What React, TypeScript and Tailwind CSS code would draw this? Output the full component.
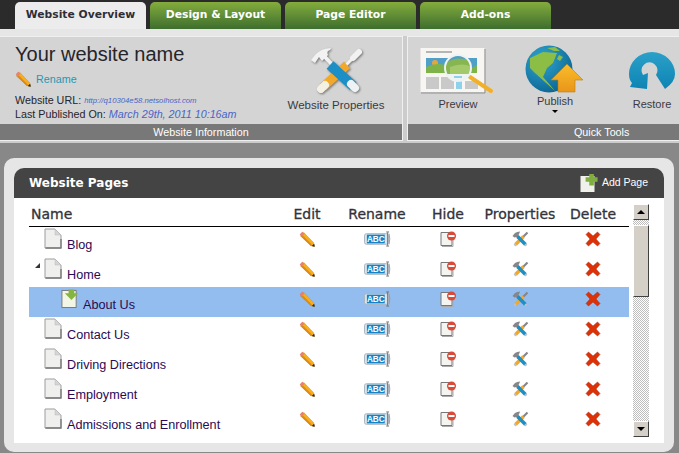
const sans = "font-['Liberation_Sans',Arial,sans-serif]";
const dejavu = "font-['DejaVu_Sans',Verdana,sans-serif]";
const columns = 'grid grid-cols-[248px_60px_80px_62px_82px_64px_4px]';

const Pencil = () => (
  <svg viewBox="0 0 16 16" className="w-4 h-4 drop-shadow-[0.5px_0.5px_0.5px_rgba(0,0,0,0.35)]">
    <path d="M1.5 5 5 1.500 15 12 15.500 15.500 12 15Z" fill="#f5ae24" />
    <path d="M1.5 5 12 15 13.500 14.200 3 3.500Z" fill="#dd8a14" />
    <path d="M.8 3.500 3.500.8 5.500 2.800 2.800 5.500Z" fill="#e8836a" />
    <path d="M12.800 15.100 15.100 12.800 15.700 15.700Z" fill="#222" />
  </svg>
);

const AbcIcon = () => (
  <svg viewBox="0 0 28 16" className="w-[27px] h-[16px]">
    <rect x="0.500" y="2.500" width="25" height="11" rx="2" fill="#dbe3ea" stroke="#aab4bd" />
    <rect x="3" y="3.500" width="18.500" height="9" fill="#1583c4" />
    <text x="12.200" y="11" textAnchor="middle" fontSize="8.500" fontWeight="700" fill="#fff" fontFamily="Liberation Sans">ABC</text>
    <path d="M23 .7h3M23 15.300h3M24.500 1v14" stroke="#77706a" strokeWidth="1" fill="none" />
    <path d="M26 2.500q1.500 5.500 0 11" stroke="#9a9a9a" strokeWidth="1" fill="none" />
  </svg>
);

const HideIcon = () => (
  <svg viewBox="0 0 17 16" className="w-[17px] h-[16px]">
    <path d="M1 1.500h11v13H1Z" fill="#f4f4f0" stroke="#77777a" />
    <path d="M2 15.500h11V9" stroke="#aaa" fill="none" />
    <circle cx="11.500" cy="5" r="4.500" fill="#d94a38" />
    <rect x="8.500" y="4" width="6" height="2" fill="#fff" />
  </svg>
);

const LargeTools = () => (
  <svg viewBox="0 0 52 50" className="w-[52px] h-[50px] drop-shadow-[1px_1px_1px_rgba(0,0,0,0.45)]">
    <path d="M15 11 29 26" stroke="#f2f2f2" strokeWidth="4" />
    <path d="M1 14 6 8Q12 2 21 2L20 4Q16 5 18 9L12 15 9 11 5 17Z" fill="#f2f2f2" />
    <path d="M31 24 44 11" stroke="#f2f2f2" strokeWidth="3" />
    <path d="M43 12 49 6" stroke="#f2f2f2" strokeWidth="6" strokeLinecap="round" />
    <path d="M37 19 13 41" stroke="#f2a82a" strokeWidth="9" />
    <path d="M15 39 11 43" stroke="#f4f0e4" strokeWidth="8" strokeLinecap="round" />
    <path d="M20 19 43 40" stroke="#1b8fc6" strokeWidth="10" />
    <path d="M41 38 45 42" stroke="#eef2f4" strokeWidth="8" strokeLinecap="round" />
  </svg>
);

const SmallTools = () => (
  <svg viewBox="0 0 17 16" className="w-[17px] h-[16px]">
    <path d="M.5 5 3 2Q5 .5 8 .5L7.500 2 6.500 4 8 6 6 8 4.500 6 2.500 6.500Z" fill="#85858a" />
    <path d="M10 7 15.500 1.500" stroke="#85858a" strokeWidth="2.200" />
    <path d="M11.500 5.500 3.500 13.500" stroke="#f2a82a" strokeWidth="3.500" />
    <path d="M5.500 5.500 13.500 13.500" stroke="#1b8fc6" strokeWidth="3.500" />
    <path d="M3.800 13.200 2.500 14.500M13.200 13.200 14.500 14.500" stroke="#b9c2c8" strokeWidth="2.500" />
  </svg>
);

const DeleteX = () => (
  <svg viewBox="0 0 16 16" className="w-4 h-4">
    <path d="M1 3.500 3.500 1 8 5 12.500 1 15 3.500 11 8 15 12.500 12.500 15 8 11 3.500 15 1 12.500 5 8Z" fill="#dd3208" stroke="#a82a10" strokeWidth=".5" />
  </svg>
);

const PageIcon = () => (
  <svg viewBox="0 0 18 21" className="w-[18px] h-[21px] shrink-0">
    <path d="M1 1h10l6 6v13H1Z" fill="#efefed" stroke="#9d9d9d" />
    <path d="M11 1v6h6Z" fill="#d5d5d8" stroke="#bbb" strokeWidth=".5" />
    <path d="M1.500 20h15.500V11" stroke="#777" strokeWidth="1.300" fill="none" />
  </svg>
);

const NewPageIcon = () => (
  <svg viewBox="0 0 19 21" className="w-[18px] h-[21px] shrink-0">
    <rect x="1" y="2" width="15" height="18" fill="#f3f5e6" stroke="#77777a" />
    <path d="M8 1h6v4h4l-7 7-7-7h4Z" fill="#86b440" />
  </svg>
);

const AddPageIcon = () => (
  <svg viewBox="0 0 19 18" className="w-[19px] h-[18px]">
    <rect x="0.500" y="2" width="14" height="16" fill="#f1f1ec" />
    <path d="M9 0h5v4h4v5h-4v4H9V9H5V4h4Z" transform="translate(1 -.5) scale(.92)" fill="#7fae3e" />
  </svg>
);

const PreviewIcon = () => (
  <svg viewBox="0 0 76 48" className="w-[76px] h-[48px]">
    <defs>
      <clipPath id="lens">
        <circle cx="38" cy="21" r="13" />
      </clipPath>
    </defs>
    <rect x="0.500" y="1" width="64" height="44" fill="#f7f6f2" />
    <path d="M1 46h64V2" stroke="#8f8f8f" fill="none" />
    <rect x="6" y="4" width="26" height="2" fill="#b5b5b5" />
    <rect x="6" y="11" width="51" height="15" fill="#4f9fc9" />
    <circle cx="15" cy="16" r="3" fill="#e7a63b" />
    <path d="M6 26V20Q18 14 32 20T57 18V26Z" fill="#7eb34a" />
    <rect x="6" y="30" width="13" height="12" fill="#c9c9c9" />
    <rect x="21" y="30" width="13" height="12" fill="#c9c9c9" />
    <rect x="36" y="30" width="6" height="12" fill="#8fd0ea" />
    <rect x="45" y="34" width="13" height="8" fill="#c9c9c9" />
    <path d="M50 30 71 44" stroke="#f2b02a" strokeWidth="4" strokeLinecap="round" />
    <g clipPath="url(#lens)">
      <rect x="24" y="7" width="28" height="28" fill="#eef4f4" />
      <rect x="24" y="7" width="28" height="8" fill="#4f9fc9" />
      <path d="M24 17Q36 8 52 14V27H24Z" fill="#86b552" />
      <path d="M30 20Q42 15 52 20V27H30Z" fill="#a3c96a" />
      <rect x="34" y="29" width="8" height="2" fill="#8fd0ea" />
    </g>
    <circle cx="38" cy="21" r="13" fill="none" stroke="#eef2f2" strokeWidth="2" />
  </svg>
);

const GlobeIcon = () => (
  <svg viewBox="0 0 60 48" className="w-[60px] h-[48px]">
    <defs>
      <radialGradient id="ocean" cx="35%" cy="30%" r="75%">
        <stop offset="0%" stopColor="#2fa6cf" />
        <stop offset="100%" stopColor="#0c6593" />
      </radialGradient>
      <linearGradient id="arrow" x1="0" y1="0" x2="0" y2="1">
        <stop offset="0%" stopColor="#fbbd2a" />
        <stop offset="100%" stopColor="#e9951a" />
      </linearGradient>
    </defs>
    <circle cx="24" cy="24" r="23.500" fill="url(#ocean)" />
    <path d="M5 13 18 7 32 8 28 18 22 23 18 32 25 40 30 46 20 37 10 28 5 23Z" fill="#8cbd45" />
    <path d="M22 3 30 2 35 6 29 6Z" fill="#8cbd45" />
    <path d="M34 10 38 12 35 16 32 14Z" fill="#8cbd45" />
    <path d="M42 19 58 35H50V47H33V35H26Z" fill="url(#arrow)" stroke="#b97f14" strokeWidth=".6" />
  </svg>
);

const RestoreIcon = () => (
  <svg viewBox="0 0 48 42" className="w-[48px] h-[42px]">
    <defs>
      <linearGradient id="restore" x1="0" y1="0" x2="0" y2="1">
        <stop offset="0%" stopColor="#2ba0c9" />
        <stop offset="100%" stopColor="#0d84b4" />
      </linearGradient>
    </defs>
    <path
      d="M37 39Q47 32 47 24A23 22 0 0 0 24 2A23 22 0 0 0 1 24Q1 30 4 33L2 37 19 39 20 23 15 25A8 8 0 1 1 28 25Z"
      fill="url(#restore)"
    />
  </svg>
);

const ScrollButton = ({ up }: { up?: boolean }) => (
  <div className="w-4 h-4 bg-[#d4d0c8] border border-t-white border-l-white border-r-[#404040] border-b-[#404040] flex items-center justify-center">
    <div className={`w-0 h-0 border-x-[4px] border-x-transparent ${up ? 'border-b-[4px] border-b-black' : 'border-t-[4px] border-t-black'}`} />
  </div>
);

const pages = [
  { name: 'Blog', indent: 'pl-[15px]' },
  { name: 'Home', indent: 'pl-[15px]', arrow: true },
  { name: 'About Us', indent: 'pl-[32px]', selected: true },
  { name: 'Contact Us', indent: 'pl-[15px]' },
  { name: 'Driving Directions', indent: 'pl-[15px]' },
  { name: 'Employment', indent: 'pl-[15px]' },
  { name: 'Admissions and Enrollment', indent: 'pl-[15px]' },
];

const tabs = ['Design & Layout', 'Page Editor', 'Add-ons'];

const App = () => {
  return (
    <div className={`w-[679px] h-[453px] overflow-hidden bg-[#888888] ${sans}`}>
      {/* Tabs */}
      <div className="h-[29px] bg-[#2b2b2b] flex items-end gap-1 pl-[15px]">
        <div className={`w-[131px] h-[27px] bg-[#ececec] rounded-t-[5px] flex items-center justify-center text-[10.75px] font-bold text-[#2e2e38] ${dejavu}`}>
          Website Overview
        </div>
        {tabs.map((tab) => (
          <div
            key={tab}
            className={`w-[131px] h-[27px] rounded-t-[5px] bg-gradient-to-b from-[#84ad3c] to-[#3e6e2e] flex items-center justify-center text-[10.75px] font-bold text-white ${dejavu}`}
          >
            {tab}
          </div>
        ))}
      </div>

      {/* Toolbar */}
      <div className="h-[114px] bg-[#cccccc] border-t-[7px] border-[#e6e6e6] flex gap-1">
        <div className="w-[403px] h-[105px] bg-[#d4d4d4] border-t border-r border-b border-[#f0f0f0] flex flex-col">
          <div className="flex-1 flex pl-[15px]">
            <div className="w-[240px] flex flex-col text-[#25252b]">
              <div className="text-[20px] leading-[23px] mt-[6px]">Your website name</div>
              <div className="flex items-center gap-[5px] mt-[5px] text-[10.75px] text-[#1c9ab4]">
                <Pencil />
                Rename
              </div>
              <div className="text-[10.75px] leading-[13px] mt-[7px] flex items-center gap-[3px]">
                Website URL:
                <span className="text-[7.75px] italic text-[#4a64c8]">http://q10304e58.netsolhost.com</span>
              </div>
              <div className="text-[10.75px] leading-[14px] flex items-center gap-[3px] whitespace-nowrap">
                Last Published On:
                <span className="italic text-[#4a64c8]">March 29th, 2011 10:16am</span>
              </div>
            </div>
            <div className="w-[110px] ml-[26px] flex flex-col items-center pt-[9px] text-[11.5px] leading-[13px] text-[#3a3a42] whitespace-nowrap">
              <LargeTools />
              <div className="mt-[3px]">Website Properties</div>
            </div>
          </div>
          <div className="h-[16px] bg-[#787878] text-white text-[10.75px] leading-[16px] text-center">Website Information</div>
        </div>
        <div className="flex-1 h-[105px] bg-[#d4d4d4] border-t border-l border-b border-[#f0f0f0] flex flex-col">
          <div className="flex-1 flex items-start overflow-hidden text-[11px] leading-[13px] text-[#3a3a42]">
            <div className="w-[76px] shrink-0 ml-[12px] flex flex-col items-center pt-[10px]">
              <PreviewIcon />
              <div className="mt-[3px]">Preview</div>
            </div>
            <div className="w-[70px] shrink-0 ml-[24px] flex flex-col items-center pt-[8px]">
              <GlobeIcon />
              <div className="mt-[2px]">Publish</div>
              <div className="mt-[2px] w-0 h-0 border-x-[3px] border-x-transparent border-t-[3px] border-t-black" />
            </div>
            <div className="w-[48px] shrink-0 ml-[38px] flex flex-col items-center pt-[13px]">
              <RestoreIcon />
              <div className="mt-[6px]">Restore</div>
            </div>
          </div>
          <div className="h-[16px] bg-[#787878] text-white text-[10.75px] leading-[16px] pl-[166px]">Quick Tools</div>
        </div>
      </div>

      {/* Pages card */}
      <div className="ml-[4px] mt-[15px] w-[670px] h-[294px] bg-[#e6e6e6] rounded-[10px] pt-[10px] pl-[10px]">
        <div className="w-[650px] h-[30px] bg-[#444444] rounded-t-[10px] flex items-center justify-between pl-[15px] pr-[16px]">
          <span className={`text-[12px] font-bold text-white ${dejavu}`}>Website Pages</span>
          <span className="flex items-center gap-[3px] text-[10.5px] text-white">
            <AddPageIcon />
            Add Page
          </span>
        </div>
        <div className="w-[650px] h-[245px] bg-white flex">
          <div className="w-[600px] ml-[15px]">
            <div className={`h-[29px] pt-[5px] border-b-[1.5px] border-black ${columns} items-center text-[14px] text-[#33333b] [-webkit-text-stroke:0.3px] ${dejavu}`}>
              <span className="pl-[2px]">Name</span>
              <span className="text-center">Edit</span>
              <span className="text-center">Rename</span>
              <span className="text-center">Hide</span>
              <span className="text-center whitespace-nowrap">Properties</span>
              <span className="text-center">Delete</span>
            </div>
            {pages.map((page) => (
              <div key={page.name} className={`h-[30px] ${columns} ${page.selected ? 'bg-[#93bdee]' : 'bg-white'}`}>
                <div className={`relative flex ${page.indent} ${page.selected ? 'gap-[4px]' : 'gap-[5px]'} pt-[1px]`}>
                  {page.arrow && (
                    <div className="absolute left-[6px] top-[6px] w-0 h-0 border-b-[5px] border-b-[#333] border-l-[5px] border-l-transparent" />
                  )}
                  {page.selected ? <NewPageIcon /> : <PageIcon />}
                  <span className="text-[12.65px] leading-[14px] mt-[10px] text-[#2a0a55] whitespace-nowrap">{page.name}</span>
                </div>
                <div className="flex justify-center pt-[4px]"><Pencil /></div>
                <div className="flex justify-center pt-[4px]"><AbcIcon /></div>
                <div className="flex justify-center pt-[4px]"><HideIcon /></div>
                <div className="flex justify-center pt-[4px]"><SmallTools /></div>
                <div className="flex justify-center pt-[4px]"><DeleteX /></div>
              </div>
            ))}
          </div>
          {/* Scrollbar */}
          <div className="ml-[4px] mt-[6px] w-4 h-[233px] flex flex-col bg-[repeating-conic-gradient(#bdbdbd_0%_25%,#ffffff_0%_50%)] bg-[length:2px_2px]">
            <ScrollButton up />
            <div className="mt-[5px] h-[72px] bg-[#d4d0c8] border border-t-white border-l-white border-r-[#404040] border-b-[#404040]" />
            <div className="mt-auto"><ScrollButton /></div>
          </div>
        </div>
      </div>
    </div>
  );
};

export default App;
